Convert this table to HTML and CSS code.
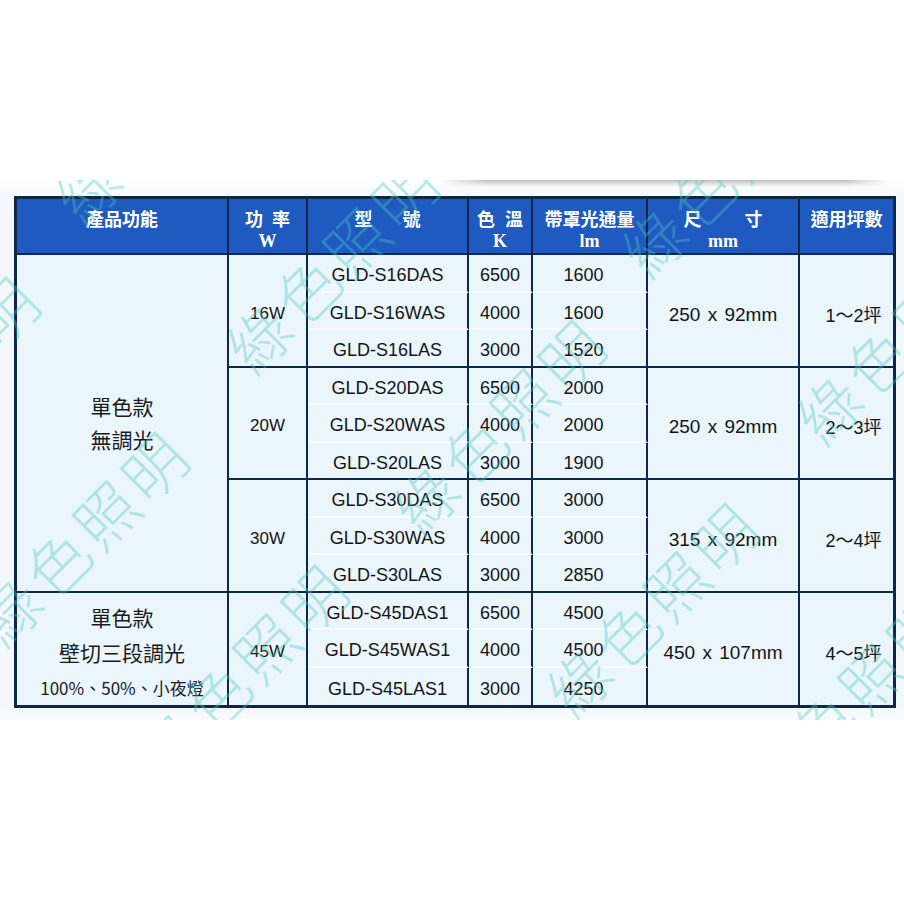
FILE: index.html
```html
<!DOCTYPE html>
<html lang="zh-Hant">
<head>
<meta charset="utf-8">
<title>產品規格</title>
<link rel="stylesheet" href="styles.css">
</head>
<body>
<div class="photo">
  <div class="shade"></div>
  <div class="spec">
    <div class="c th"><span class="l1">產品功能</span></div>
    <div class="c th"><span class="l1 g9">功率</span><span class="l2">W</span></div>
    <div class="c th"><span class="l1 g30">型號</span><span class="l2">&nbsp;</span></div>
    <div class="c th"><span class="l1 g10">色溫</span><span class="l2">K</span></div>
    <div class="c th"><span class="l1">帶罩光通量</span><span class="l2">lm</span></div>
    <div class="c th"><span class="l1 g43">尺寸</span><span class="l2">mm</span></div>
    <div class="c th nr"><span class="l1">適用坪數</span></div>

    <div class="c desc span9"><span>單色款</span><span>無調光</span></div>
    <div class="c pw span3">16W</div>
    <div class="c sub soft">GLD-S16DAS</div>
    <div class="c sub soft">6500</div>
    <div class="c sub soft lm">1600</div>
    <div class="c dim span3">250 x 92mm</div>
    <div class="c area span3 nr">1～2坪</div>
    <div class="c sub soft">GLD-S16WAS</div>
    <div class="c sub soft">4000</div>
    <div class="c sub soft lm">1600</div>
    <div class="c sub">GLD-S16LAS</div>
    <div class="c sub">3000</div>
    <div class="c sub lm">1520</div>

    <div class="c pw span3">20W</div>
    <div class="c sub soft">GLD-S20DAS</div>
    <div class="c sub soft">6500</div>
    <div class="c sub soft lm">2000</div>
    <div class="c dim span3">250 x 92mm</div>
    <div class="c area span3 nr">2～3坪</div>
    <div class="c sub soft">GLD-S20WAS</div>
    <div class="c sub soft">4000</div>
    <div class="c sub soft lm">2000</div>
    <div class="c sub">GLD-S20LAS</div>
    <div class="c sub">3000</div>
    <div class="c sub lm">1900</div>

    <div class="c pw span3">30W</div>
    <div class="c sub soft">GLD-S30DAS</div>
    <div class="c sub soft">6500</div>
    <div class="c sub soft lm">3000</div>
    <div class="c dim span3">315 x 92mm</div>
    <div class="c area span3 nr">2～4坪</div>
    <div class="c sub soft">GLD-S30WAS</div>
    <div class="c sub soft">4000</div>
    <div class="c sub soft lm">3000</div>
    <div class="c sub">GLD-S30LAS</div>
    <div class="c sub">3000</div>
    <div class="c sub lm">2850</div>

    <div class="c desc desc2 span3 nb"><span>單色款</span><span>壁切三段調光</span><span class="small">100%、50%、小夜燈</span></div>
    <div class="c pw span3 nb">45W</div>
    <div class="c sub soft">GLD-S45DAS1</div>
    <div class="c sub soft">6500</div>
    <div class="c sub soft lm">4500</div>
    <div class="c dim span3 nb">450 x 107mm</div>
    <div class="c area span3 nr nb">4～5坪</div>
    <div class="c sub soft">GLD-S45WAS1</div>
    <div class="c sub soft">4000</div>
    <div class="c sub soft lm">4500</div>
    <div class="c sub nb">GLD-S45LAS1</div>
    <div class="c sub nb">3000</div>
    <div class="c sub lm nb">4250</div>
  </div>

  <div class="wm w8">綠色照明</div>
  <div class="wm w1">綠色照明</div>
  <div class="wm w4">綠色照明</div>
  <div class="wm w9">綠色照明</div>
  <div class="wm w0">綠色照明</div>
  <div class="wm w2">綠色照明</div>
  <div class="wm w5">綠色照明</div>
  <div class="wm w6">綠色照明</div>
  <div class="wm w3">綠色照明</div>
  <div class="wm w7">綠色照明</div>
</div>
</body>
</html>
```

FILE: styles.css
```css
* { box-sizing: border-box; }
html, body { margin: 0; padding: 0; background: #ffffff; }
body {
  font-family: "Liberation Sans", "Noto Sans CJK TC", Arial, sans-serif;
  width: 904px;
  height: 904px;
  overflow: hidden;
}

.photo {
  position: relative;
  margin-top: 180px;
  height: 540px;
  overflow: hidden;
  background: linear-gradient(to bottom, #fdfeff 0, #f2f8fb 22px, #f2f8fb 520px, #f8fbfd 540px);
}

.shade {
  height: 7px;
  margin-left: 440px;
  width: 450px;
  background: linear-gradient(to bottom, rgba(130,130,130,0.5), rgba(220,220,220,0));
  -webkit-mask-image: linear-gradient(to right, transparent, #000 10%, #000 90%, transparent);
  mask-image: linear-gradient(to right, transparent, #000 10%, #000 90%, transparent);
}

.spec {
  display: grid;
  width: 882px;
  margin: 9px 0 0 14px;
  grid-template-columns: 212px 79px 161px 64px 115px 152px 93px;
  grid-template-rows: 56px repeat(12, 37.5px);
  border: 3px solid #0f2746;
  background: #eaf5fc;
}

.c {
  display: flex;
  align-items: center;
  justify-content: center;
  border-right: 2px solid #0f2746;
  border-bottom: 2px solid #0f2746;
  font-size: 18px;
  color: #141414;
  white-space: nowrap;
}

.th {
  background: #1e5abf;
  color: #ffffff;
  flex-direction: column;
  justify-content: flex-start;
  padding-top: 8px;
}
.th .l1 {
  font-family: "Noto Sans CJK TC", sans-serif;
  font-weight: 700;
  font-size: 18px;
  line-height: 23px;
}
.th .l2 {
  font-family: "Liberation Serif", serif;
  font-weight: 700;
  font-size: 18px;
  line-height: 23px;
}
.g9 { letter-spacing: 9px; padding-left: 9px; }
.g10 { letter-spacing: 10px; padding-left: 10px; }
.g30 { letter-spacing: 30px; padding-left: 30px; }
.g43 { letter-spacing: 43px; padding-left: 43px; }

.span9 { grid-row: span 9; }
.span3 { grid-row: span 3; }

.soft { border-bottom: 2px solid #f9fcff; }
.nr { border-right: 0; }
.nb { border-bottom: 0; }

.sub { padding-top: 6px; }
.lm { padding-right: 12px; }
.pw { font-size: 17px; padding-top: 7px; }
.dim { font-size: 19px; word-spacing: 2px; padding-top: 9px; }
.area { padding-left: 14px; padding-top: 7px; }

.desc {
  flex-direction: column;
  font-family: "Noto Sans CJK TC", sans-serif;
  font-size: 21px;
  line-height: 33px;
  color: #1a1a1a;
}
.desc2 { line-height: 35px; padding-top: 7px; }
.desc .small { font-size: 17px; }

.wm {
  position: absolute;
  font-family: "Noto Sans CJK TC", sans-serif;
  font-weight: 300;
  font-size: 62px;
  line-height: 1;
  letter-spacing: 6px;
  padding-left: 6px;
  color: rgba(80, 200, 195, 0.38);
  white-space: nowrap;
  transform: translate(-50%, -50%) rotate(-45deg);
  pointer-events: none;
}
.w8 { left: 159px; top: -65px; }
.w1 { left: 330px; top: 84px; }
.w4 { left: 725px; top: -12px; }
.w9 { left: -69px; top: 202px; }
.w0 { left: 80px; top: 357px; }
.w2 { left: 497px; top: 245px; }
.w5 { left: 900px; top: 155px; }
.w6 { left: 240px; top: 490px; }
.w3 { left: 650px; top: 428px; }
.w7 { left: 845px; top: 520px; }
```
